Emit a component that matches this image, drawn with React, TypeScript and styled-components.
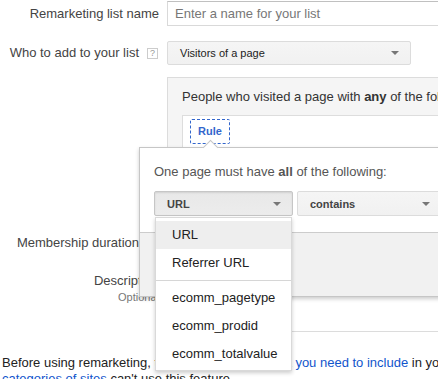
import styled, { createGlobalStyle } from "styled-components";

const GlobalStyle = createGlobalStyle`
  body {
    margin: 0;
    font-family: "Liberation Sans", Arial, sans-serif;
    font-size: 13px;
    color: #222;
    background: #fff;
    overflow: hidden;
  }
`;

const Page = styled.div`
  position: relative;
  width: 640px;
  padding: 1px 0 0 2px;
`;

const Row = styled.div<{ $gap: number }>`
  display: flex;
  align-items: center;
  gap: 8px;
  margin-top: ${(p) => p.$gap}px;
`;

const TopRow = styled(Row)`
  align-items: flex-start;
`;

const Label = styled.div`
  width: 157px;
  flex: none;
  display: flex;
  flex-direction: column;
  align-items: flex-end;
  color: #444;
  line-height: 16px;
  text-align: right;
`;

const LabelLine = styled.div`
  display: flex;
  align-items: center;
  gap: 8px;
`;

const Hint = styled.div`
  font-size: 11px;
  line-height: 14px;
  color: #777;
  margin-top: 1px;
`;

const HelpIcon = styled.span`
  width: 9px;
  height: 9px;
  border: 1px solid #ccc;
  font-size: 9px;
  line-height: 9px;
  color: #999;
  text-align: center;
  margin-right: 1px;
`;

const TextInput = styled.input`
  width: 300px;
  height: 25px;
  box-sizing: border-box;
  border: 1px solid #d9d9d9;
  border-top-color: #c0c0c0;
  padding: 0 7px;
  font: inherit;
  font-size: 13px;
  color: #222;
  outline: none;
  &::placeholder {
    color: #777;
  }
`;

const Select = styled.div<{ $width: number; $bold?: boolean; $pressed?: boolean }>`
  width: ${(p) => p.$width}px;
  height: ${(p) => (p.$bold ? 25 : 24)}px;
  box-sizing: border-box;
  flex: none;
  display: flex;
  align-items: center;
  justify-content: space-between;
  padding: 0 11px 0 12px;
  border: 1px solid ${(p) => (p.$pressed ? "#c6c6c6" : "#dcdcdc")};
  border-radius: 2px;
  background: ${(p) =>
    p.$pressed ? "linear-gradient(#e8e8e8, #ececec)" : "linear-gradient(#f5f5f5, #f1f1f1)"};
  box-shadow: ${(p) => (p.$pressed ? "inset 0 1px 2px rgba(0,0,0,0.1)" : "none")};
  font-size: 11px;
  font-weight: ${(p) => (p.$bold ? "bold" : "normal")};
  color: ${(p) => (p.$bold ? "#444" : "#222")};
`;

const Caret = styled.span`
  width: 0;
  height: 0;
  border-left: 4px solid transparent;
  border-right: 4px solid transparent;
  border-top: 4px solid #777;
`;

const RulePanel = styled.div`
  width: 400px;
  box-sizing: border-box;
  border: 1px solid #dcdcdc;
  background: #f5f5f5;
  padding: 11px 14px 12px;
  line-height: 16px;
  color: #333;
`;

const RuleList = styled.div`
  margin-top: 10px;
  min-height: 80px;
  background: #fff;
  border: 1px solid #ddd;
  padding: 3px 7px;
`;

const RuleChip = styled.div`
  display: inline-block;
  height: 25px;
  box-sizing: border-box;
  border: 1px dashed #3366cc;
  border-radius: 2px;
  padding: 0 7px;
  font-size: 11px;
  font-weight: bold;
  line-height: 23px;
  color: #3366cc;
`;

const Divider = styled.div`
  margin: 27px 0 0 165px;
  height: 1px;
  background: #dcdcdc;
`;

const Notice = styled.p`
  margin: 23px 0 0;
  line-height: 16px;
  color: #222;
  white-space: nowrap;
`;

const Link = styled.a`
  color: #15c;
  text-decoration: none;
`;

const Popup = styled.div`
  position: absolute;
  left: 139px;
  top: 147px;
  width: 340px;
  background: #fff;
  border: 1px solid #c6c6c6;
  box-shadow: 0 2px 4px rgba(0, 0, 0, 0.2);
`;

const Pointer = styled.div`
  position: absolute;
  left: 65px;
  top: -6px;
  width: 10px;
  height: 10px;
  background: #fff;
  border-left: 1px solid #c6c6c6;
  border-top: 1px solid #c6c6c6;
  transform: rotate(45deg);
`;

const PopupBody = styled.div`
  padding: 16px 14px;
  line-height: 16px;
  color: #555;
`;

const ControlRow = styled.div`
  display: flex;
  gap: 4px;
  margin-top: 11px;
`;

const PopupFooter = styled.div`
  height: 63px;
  border-top: 1px solid #ccc;
  background: #f1f1f1;
`;

const Menu = styled.div`
  position: absolute;
  left: 15px;
  top: 69px;
  width: 137px;
  box-sizing: border-box;
  padding: 3px 0 2px;
  background: #fff;
  border: 1px solid rgba(0, 0, 0, 0.15);
  box-shadow: 0 2px 4px rgba(0, 0, 0, 0.2);
`;

const MenuItem = styled.div<{ $active?: boolean }>`
  height: 28px;
  line-height: 28px;
  padding-left: 16px;
  color: #222;
  background: ${(p) => (p.$active ? "#eee" : "transparent")};
`;

const MenuSeparator = styled.div`
  height: 1px;
  margin: 3px 0;
  background: #d6d6d6;
`;

const fieldOptions = ["URL", "Referrer URL"];
const customParams = ["ecomm_pagetype", "ecomm_prodid", "ecomm_totalvalue"];

export default function App() {
  return (
    <>
      <GlobalStyle />
      <Page>
        <Row $gap={0}>
          <Label>Remarketing list name</Label>
          <TextInput placeholder="Enter a name for your list" />
        </Row>
        <Row $gap={15}>
          <Label>
            <LabelLine>
              Who to add to your list
              <HelpIcon>?</HelpIcon>
            </LabelLine>
          </Label>
          <Select $width={244}>
            Visitors of a page
            <Caret />
          </Select>
        </Row>
        <TopRow $gap={12}>
          <Label />
          <RulePanel>
            People who visited a page with <b>any</b> of the following:
            <RuleList>
              <RuleChip>Rule</RuleChip>
            </RuleList>
          </RulePanel>
        </TopRow>
        <Row $gap={15}>
          <Label>
            <LabelLine>
              Membership duration
              <HelpIcon>?</HelpIcon>
            </LabelLine>
          </Label>
          <Select $width={120}>
            30 days
            <Caret />
          </Select>
        </Row>
        <TopRow $gap={18}>
          <Label>
            Description
            <Hint>Optional</Hint>
          </Label>
        </TopRow>
        <Divider />
        <Notice>
          Before using remarketing, take a look at <Link href="#">what data you need to include</Link> in your
          privacy policy. Some
          <br />
          <Link href="#">categories of sites</Link> can't use this feature.
        </Notice>

        <Popup>
          <Pointer />
          <PopupBody>
            One page must have <b>all</b> of the following:
            <ControlRow>
              <Select $width={139} $bold $pressed>
                URL
                <Caret />
              </Select>
              <Select $width={145} $bold>
                contains
                <Caret />
              </Select>
            </ControlRow>
          </PopupBody>
          <PopupFooter />
          <Menu>
            {fieldOptions.map((opt, i) => (
              <MenuItem key={opt} $active={i === 0}>
                {opt}
              </MenuItem>
            ))}
            <MenuSeparator />
            {customParams.map((opt) => (
              <MenuItem key={opt}>{opt}</MenuItem>
            ))}
          </Menu>
        </Popup>
      </Page>
    </>
  );
}
